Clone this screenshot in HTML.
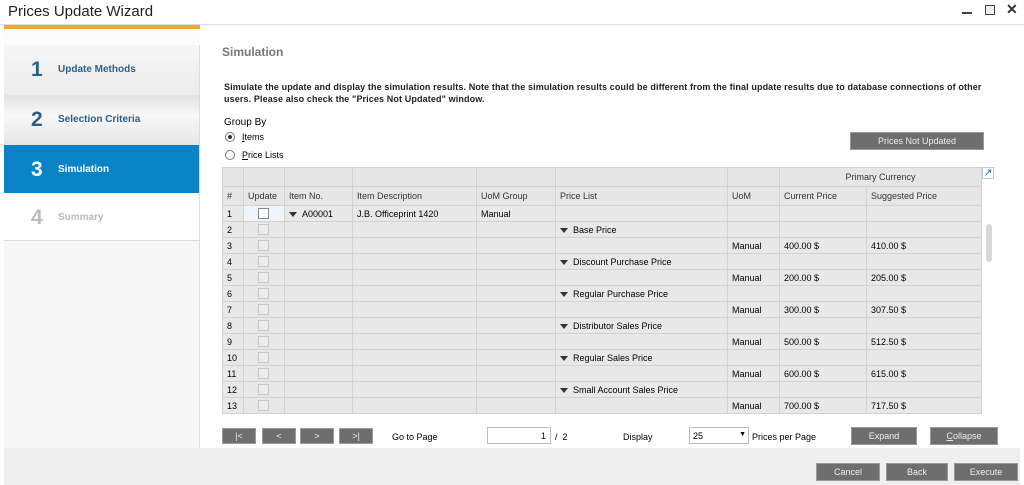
<!DOCTYPE html>
<html><head><style>
*{margin:0;padding:0;box-sizing:border-box}
body{width:1024px;height:485px;background:#fff;font-family:"Liberation Sans",sans-serif;position:relative;overflow:hidden;color:#000}
.a{position:absolute}
.step{position:absolute;left:4px;width:195px;height:50px;font-weight:bold;font-size:10px;color:#2a5f86}
.step b{position:absolute;left:27px;top:13px;font-size:21px}
.step span{position:absolute;left:54px;top:19px}
table{border-collapse:collapse;position:absolute;left:222px;top:167px;font-size:9px;table-layout:fixed}
td{border:1px solid #d2d2d2;background:#e8e8e8;height:16px;padding:0 4px;white-space:nowrap;overflow:hidden}
tr.h td{height:19px;background:#e6e6e6;color:#333}
.cb{display:inline-block;width:11px;height:11px;border:1px solid #c8c8c8;background:#ececec;vertical-align:middle;margin-left:10px}
.tri{display:inline-block;width:0;height:0;border-left:4px solid transparent;border-right:4px solid transparent;border-top:5px solid #333;margin-right:5px;vertical-align:middle}
.btn{position:absolute;background:#6e6e6e;color:#eee;font-size:9px;text-align:center;border:1px solid #999}
.t{position:absolute;font-size:9px}
</style></head><body>
<div class="a" style="left:8px;top:3px;font-size:15px;color:#222">Prices Update Wizard</div>
<div class="a" style="left:962px;top:12px;width:10px;height:2px;background:#444"></div>
<div class="a" style="left:985px;top:5px;width:10px;height:10px;border:1.5px solid #444;background:#eee"></div>
<div class="a" style="left:1006px;top:1px;font-size:14px;font-weight:bold;color:#333">✕</div>
<div class="a" style="left:0;top:24px;width:1024px;height:1px;background:#ddd"></div>
<div class="a" style="left:4px;top:25px;width:196px;height:423px;background:#f7f7f7;border-right:1px solid #ddd"></div>
<div class="a" style="left:4px;top:25px;width:196px;height:4px;background:#f0a92a"></div>
<div class="a" style="left:4px;top:29px;width:196px;height:16px;background:#fbfbfb"></div>
<div class="step" style="top:45px;background:linear-gradient(#f6f6f6,#ececec)"><b>1</b><span>Update Methods</span></div>
<div class="step" style="top:95px;background:linear-gradient(#e2e2e2,#f8f8f8 40%,#e6e6e6)"><b>2</b><span>Selection Criteria</span></div>
<div class="step" style="top:145px;height:48px;background:#0a83c6;color:#fff"><b>3</b><span>Simulation</span></div>
<div class="a" style="left:93px;top:193px;width:0;height:0;border-left:9px solid transparent;border-right:9px solid transparent;border-top:7px solid #e5e5e5"></div>
<div class="step" style="top:193px;height:48px;background:#fff;color:#bbb;border-bottom:1px solid #ddd"><b>4</b><span>Summary</span></div>
<div class="a" style="left:222px;top:45px;font-size:12px;font-weight:bold;color:#777">Simulation</div>
<div class="a" style="left:224px;top:81px;font-size:9px;line-height:12px;width:770px;font-weight:bold;color:#222;letter-spacing:0.12px">Simulate the update and display the simulation results. Note that the simulation results could be different from the final update results due to database connections of other users. Please also check the "Prices Not Updated" window.</div>
<div class="t" style="left:224px;top:117px;font-size:10px">Group By</div>
<div class="a" style="left:225px;top:132px;width:10px;height:10px;border:1px solid #777;border-radius:50%;background:#fff"></div>
<div class="a" style="left:228px;top:135px;width:4px;height:4px;border-radius:50%;background:#333"></div>
<div class="t" style="left:242px;top:132px"><u>I</u>tems</div>
<div class="a" style="left:225px;top:150px;width:10px;height:10px;border:1px solid #777;border-radius:50%;background:#fff"></div>
<div class="t" style="left:242px;top:150px"><u>P</u>rice Lists</div>
<div class="btn" style="left:850px;top:132px;width:134px;height:18px;line-height:16px">Prices Not Updated</div>
<table>
<colgroup><col style="width:21px"><col style="width:41px"><col style="width:68px"><col style="width:124px"><col style="width:79px"><col style="width:172px"><col style="width:52px"><col style="width:87px"><col style="width:115px"></colgroup>
<tr class="h"><td></td><td></td><td></td><td></td><td></td><td></td><td></td><td colspan="2" style="text-align:center">Primary Currency</td></tr>
<tr class="h"><td>#</td><td>Update</td><td>Item No.</td><td>Item Description</td><td>UoM Group</td><td>Price List</td><td>UoM</td><td>Current Price</td><td>Suggested Price</td></tr>
<tr><td>1</td><td style="background:#eef4fb"><span class="cb" style="background:#fff;border-color:#888;margin-left:10px"></span></td><td><span class="tri"></span>A00001</td><td>J.B. Officeprint 1420</td><td>Manual</td><td></td><td></td><td></td><td></td></tr>
<tr><td>2</td><td><span class="cb"></span></td><td></td><td></td><td></td><td><span class="tri"></span>Base Price</td><td></td><td></td><td></td></tr>
<tr><td>3</td><td><span class="cb"></span></td><td></td><td></td><td></td><td></td><td>Manual</td><td>400.00 $</td><td>410.00 $</td></tr>
<tr><td>4</td><td><span class="cb"></span></td><td></td><td></td><td></td><td><span class="tri"></span>Discount Purchase Price</td><td></td><td></td><td></td></tr>
<tr><td>5</td><td><span class="cb"></span></td><td></td><td></td><td></td><td></td><td>Manual</td><td>200.00 $</td><td>205.00 $</td></tr>
<tr><td>6</td><td><span class="cb"></span></td><td></td><td></td><td></td><td><span class="tri"></span>Regular Purchase Price</td><td></td><td></td><td></td></tr>
<tr><td>7</td><td><span class="cb"></span></td><td></td><td></td><td></td><td></td><td>Manual</td><td>300.00 $</td><td>307.50 $</td></tr>
<tr><td>8</td><td><span class="cb"></span></td><td></td><td></td><td></td><td><span class="tri"></span>Distributor Sales Price</td><td></td><td></td><td></td></tr>
<tr><td>9</td><td><span class="cb"></span></td><td></td><td></td><td></td><td></td><td>Manual</td><td>500.00 $</td><td>512.50 $</td></tr>
<tr><td>10</td><td><span class="cb"></span></td><td></td><td></td><td></td><td><span class="tri"></span>Regular Sales Price</td><td></td><td></td><td></td></tr>
<tr><td>11</td><td><span class="cb"></span></td><td></td><td></td><td></td><td></td><td>Manual</td><td>600.00 $</td><td>615.00 $</td></tr>
<tr><td>12</td><td><span class="cb"></span></td><td></td><td></td><td></td><td><span class="tri"></span>Small Account Sales Price</td><td></td><td></td><td></td></tr>
<tr><td>13</td><td><span class="cb"></span></td><td></td><td></td><td></td><td></td><td>Manual</td><td>700.00 $</td><td>717.50 $</td></tr>
</table>
<div class="a" style="left:982px;top:167px;width:12px;height:12px;border:1px solid #bcd;color:#2a6fb0;font-size:11px;line-height:10px;text-align:center">↗</div>
<div class="a" style="left:986px;top:224px;width:6px;height:38px;background:#d8d8d8;border-radius:3px"></div>
<div class="btn" style="left:222px;top:428px;width:34px;height:16px;line-height:14px">|&lt;</div>
<div class="btn" style="left:262px;top:428px;width:34px;height:16px;line-height:14px">&lt;</div>
<div class="btn" style="left:300px;top:428px;width:34px;height:16px;line-height:14px">&gt;</div>
<div class="btn" style="left:339px;top:428px;width:34px;height:16px;line-height:14px">&gt;|</div>
<div class="t" style="left:392px;top:432px">Go to Page</div>
<div class="a" style="left:487px;top:427px;width:64px;height:17px;border:1px solid #bbb;background:#fff;font-size:9px;text-align:right;padding:3px 4px 0 0">1</div>
<div class="t" style="left:555px;top:432px">/ &nbsp;2</div>
<div class="t" style="left:623px;top:432px">Display</div>
<div class="a" style="left:689px;top:427px;width:60px;height:17px;border:1px solid #bbb;background:#fff;font-size:9px;padding:3px 0 0 3px">25<span style="position:absolute;right:2px;top:3px;font-size:7px">▼</span></div>
<div class="t" style="left:752px;top:432px">Prices per Page</div>
<div class="btn" style="left:851px;top:427px;width:66px;height:18px;line-height:16px">Expand</div>
<div class="btn" style="left:930px;top:427px;width:68px;height:18px;line-height:16px"><u>C</u>ollapse</div>
<div class="a" style="left:4px;top:448px;width:1016px;height:37px;background:#efefef"></div>
<div class="btn" style="left:816px;top:463px;width:64px;height:18px;line-height:16px">Cancel</div>
<div class="btn" style="left:886px;top:463px;width:62px;height:18px;line-height:16px">Back</div>
<div class="btn" style="left:954px;top:463px;width:64px;height:18px;line-height:16px">Execute</div>
</body></html>
